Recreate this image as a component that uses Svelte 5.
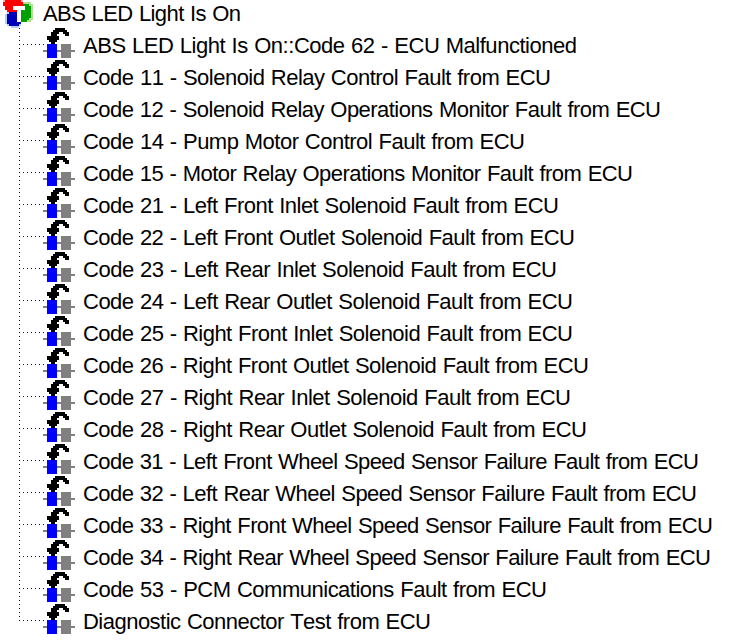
<script lang="ts">
  const root = { name: "ABS LED Light Is On", width: 198 }
  const items = [
    { name: "ABS LED Light Is On::Code 62 - ECU Malfunctioned", width: 494 },
    { name: "Code 11 - Solenoid Relay Control Fault from ECU", width: 468 },
    { name: "Code 12 - Solenoid Relay Operations Monitor Fault from ECU", width: 578 },
    { name: "Code 14 - Pump Motor Control Fault from ECU", width: 442 },
    { name: "Code 15 - Motor Relay Operations Monitor Fault from ECU", width: 550 },
    { name: "Code 21 - Left Front Inlet Solenoid Fault from ECU", width: 476 },
    { name: "Code 22 - Left Front Outlet Solenoid Fault from ECU", width: 492 },
    { name: "Code 23 - Left Rear Inlet Solenoid Fault from ECU", width: 474 },
    { name: "Code 24 - Left Rear Outlet Solenoid Fault from ECU", width: 490 },
    { name: "Code 25 - Right Front Inlet Solenoid Fault from ECU", width: 490 },
    { name: "Code 26 - Right Front Outlet Solenoid Fault from ECU", width: 506 },
    { name: "Code 27 - Right Rear Inlet Solenoid Fault from ECU", width: 488 },
    { name: "Code 28 - Right Rear Outlet Solenoid Fault from ECU", width: 504 },
    { name: "Code 31 - Left Front Wheel Speed Sensor Failure Fault from ECU", width: 616 },
    { name: "Code 32 - Left Rear Wheel Speed Sensor Failure Fault from ECU", width: 614 },
    { name: "Code 33 - Right Front Wheel Speed Sensor Failure Fault from ECU", width: 630 },
    { name: "Code 34 - Right Rear Wheel Speed Sensor Failure Fault from ECU", width: 628 },
    { name: "Code 53 - PCM Communications Fault from ECU", width: 464 },
    { name: "Diagnostic Connector Test from ECU", width: 348 },
  ]
</script>

{#snippet label(item)}
  <svg class="label" width={item.width} height="32">
    <text x="0" y="25" textLength={item.width}>{item.name}</text>
  </svg>
{/snippet}

<div class="tree">
  <div class="root">
    <svg class="logo" width="32" height="28" viewBox="0 0 32 28" shape-rendering="crispEdges">
      <path fill="#b0e098" d="M18 2h10v2h2v16h-2v2H18z" />
      <path fill="#00a000" d="M18 4h8v2h2v12h-2v2h-2v2h-6z" />
      <path fill="#b0d0f0" d="M4 12h14v14h-2v2H8v-2H4v-2H2V14h2z" />
      <path fill="#0000b8" d="M6 12h10v2h2v10h-2v2H6v-2H4V14h2z" />
      <path fill="#f8b0a0" d="M0 0h20v2H0z" />
      <path fill="#ff0000" d="M2 0h16v2h2v4h-2v6H4v-2H2V6H0V2h2z" />
      <path fill="#fff" d="M10 6h12v4h-4v12h-4V10h-4z" />
    </svg>
    {@render label(root)}
  </div>
  <ul>
    {#each items as item, i}
      <li>
        <svg class="lines" width="28" height="32" shape-rendering="crispEdges">
          <path stroke="#0000a0" stroke-dasharray="1 3" d="M.5 0V{i < items.length - 1 ? 32 : 17}" />
          <path stroke="#0000a0" stroke-dasharray="1 3" d="M4 16.5H28" />
        </svg>
        <svg class="icon" width="32" height="32" viewBox="0 0 32 32" shape-rendering="crispEdges">
          <path fill="#808080" d="M0 22h32v2H0zM18 16h10v14H18z" />
          <path fill="#0000ff" d="M4 16h10v14H4z" />
          <path d="M12 0h10v2h2v2h2v4h-4V6h-2V4h-4v2h-2v2h2v4h-2v2h-2v2H8v-2H6v-2H4V8h4V4h2V2h2z" />
        </svg>
        {@render label(item)}
      </li>
    {/each}
  </ul>
</div>

<style>
  :global(body) {
    background: #fff;
  }

  .tree {
    height: 642px;
    overflow: hidden;
    color: #000;
    font: 22px "Liberation Sans", Arial, sans-serif;
    font-kerning: none;
    word-spacing: 0.8px;
    white-space: nowrap;
  }

  .root {
    display: flex;
    height: 28px;
    padding-left: 3px;
  }

  .root .label {
    margin-top: -4px;
  }

  ul {
    list-style: none;
    margin: 0;
    padding: 0 0 0 19px;
  }

  li {
    display: flex;
    height: 32px;
  }

  svg {
    flex: none;
  }

  .lines {
    margin-right: -4px;
  }

  .label {
    margin-left: 8px;
    overflow: visible;
  }
</style>
